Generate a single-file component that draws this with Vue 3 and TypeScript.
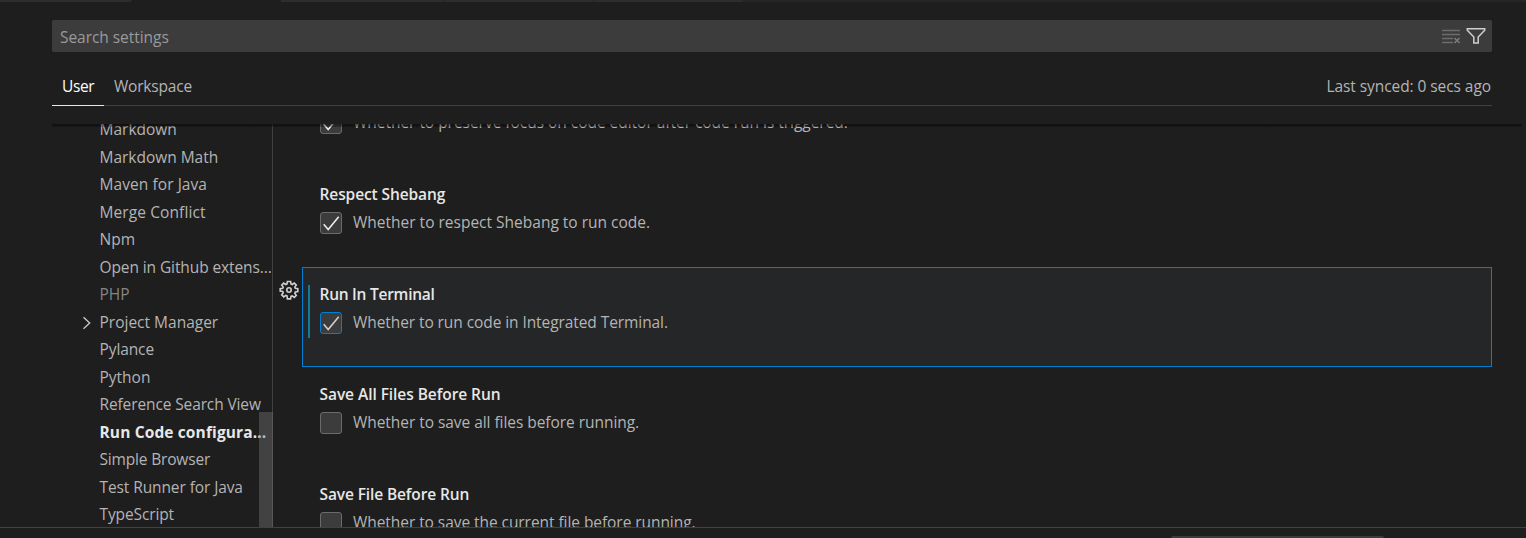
<script setup lang="ts">
interface TreeEntry {
  label: string
  muted?: boolean
  active?: boolean
  expandable?: boolean
  track?: number
}

interface Setting {
  title: string
  description: string
  checked: boolean
  selected?: boolean
  titleTrack?: number
  track?: number
}

const tree: TreeEntry[] = [
  { label: 'Markdown' },
  { label: 'Markdown Math', track: -0.02 },
  { label: 'Maven for Java', track: 0.07 },
  { label: 'Merge Conflict', track: 0.1 },
  { label: 'Npm' },
  { label: 'Open in Github extens...', track: -0.1 },
  { label: 'PHP', muted: true },
  { label: 'Project Manager', expandable: true },
  { label: 'Pylance', track: -0.1 },
  { label: 'Python' },
  { label: 'Reference Search View', track: -0.12 },
  { label: 'Run Code configura...', active: true, track: 0.13 },
  { label: 'Simple Browser', track: -0.17 },
  { label: 'Test Runner for Java', track: -0.1 },
  { label: 'TypeScript', track: -0.12 },
]

const settings: Setting[] = [
  { title: 'Preserve Focus', description: 'Whether to preserve focus on code editor after code run is triggered.', checked: true, track: -0.03 },
  { title: 'Respect Shebang', description: 'Whether to respect Shebang to run code.', checked: true, titleTrack: -0.1 },
  { title: 'Run In Terminal', description: 'Whether to run code in Integrated Terminal.', checked: true, selected: true, titleTrack: -0.25, track: -0.08 },
  { title: 'Save All Files Before Run', description: 'Whether to save all files before running.', checked: false, titleTrack: -0.06, track: -0.05 },
  { title: 'Save File Before Run', description: 'Whether to save the current file before running.', checked: false, titleTrack: -0.12, track: -0.06 },
]

const spacing = (px?: number) => ({ letterSpacing: `${px ?? 0}px` })
</script>

<template>
  <div class="window">
    <div class="tabstrip">
      <span class="tab first"></span>
      <span class="tab current"></span>
      <span class="tab wide"></span>
      <span class="tab"></span>
      <span class="tab last"></span>
    </div>

    <div class="search">
      <span class="placeholder">Search settings</span>
      <svg class="clear" width="20" height="20" viewBox="0 0 20 20">
        <path d="M1 4.500h18M1 8.500h18M1 12.500h11M1 16.500h11" />
        <path class="cross" d="M13.500 12l5 5M18.500 12l-5 5" />
      </svg>
      <svg class="filter" width="20" height="20" viewBox="0 0 20 20">
        <path d="M1.300 2.700h17.400v1.600L12.200 11.100v6H7.800v-6L1.300 4.300z" />
      </svg>
    </div>

    <div class="scopes">
      <span class="scope on">User</span>
      <span class="scope workspace">Workspace</span>
      <span class="sync">Last synced: 0 secs ago</span>
    </div>

    <div class="body">
      <nav class="toc">
        <div class="rows">
          <div v-for="row in tree" :key="row.label" class="row" :class="{ muted: row.muted, active: row.active }">
            <span class="twistie">
              <svg v-if="row.expandable" width="10" height="14" viewBox="0 0 10 14"><path d="M1.500 1.200L7.700 7L1.500 12.800" /></svg>
            </span>
            <span class="label" :style="spacing(row.track)">{{ row.label }}</span>
          </div>
        </div>
        <div class="thumb"></div>
      </nav>

      <main class="list">
        <section v-for="item in settings" :key="item.title" class="item">
          <span class="gutter">
            <svg v-if="item.selected" class="gear" width="20" height="20" viewBox="0 0 20 20">
              <path d="M8.400 1.500h3.200l.4 2.500 1.200.5 2.100-1.500 2 2-1.500 2.100.5 1.300 2.500.4v2.800l-2.500.4-.5 1.300 1.500 2.100-2 2-2.100-1.500-1.200.5-.4 2.500H8.400L8 15.900l-1.200-.5-2.100 1.500-2-2 1.500-2.100-.5-1.300-2.500-.4V8.800l2.500-.4.5-1.300-1.500-2.100 2-2 2.100 1.500L8 4z" />
              <circle cx="10" cy="10" r="2.2" />
            </svg>
          </span>
          <div class="card" :class="{ selected: item.selected }">
            <span v-if="item.selected" class="modified"></span>
            <div class="title" :style="spacing(item.titleTrack)">{{ item.title }}</div>
            <div class="value">
              <span class="check">
                <svg v-if="item.checked" width="20" height="20" viewBox="0 0 20 20"><path d="M2.700 11.200L7.200 16.500L17.700 3.700" /></svg>
              </span>
              <span class="desc" :style="spacing(item.track)">{{ item.description }}</span>
            </div>
          </div>
        </section>
      </main>
      <div class="shadow"></div>
    </div>

    <div class="panel"><div class="panel-input"></div></div>
  </div>
</template>

<style>
html,
body {
  background: #1e1e1e;
  overflow: hidden;
}
</style>

<style scoped>
.window {
  width: 1526px;
  height: 538px;
  display: flex;
  flex-direction: column;
  overflow: hidden;
  background: #1e1e1e;
  color: #b4b4b4;
  font: 15.5px/22px "Open Sans", "Noto Sans", sans-serif;
  white-space: nowrap;
}
.window * { box-sizing: border-box; }
svg { display: block; fill: none; }
.tabstrip { display: flex; flex: none; height: 2px; background: #252526; }
.tab { width: 150px; background: #2d2d2d; border-right: 1px solid #252526; }
.tab.first { width: 132px; }
.tab.current { background: #1e1e1e; border: 0; width: 149px; }
.tab.wide { width: 163px; }
.tab.last { border: 0; width: 149px; }

.search {
  flex: none;
  display: flex;
  align-items: center;
  height: 32px;
  margin: 18px 34px 0 52px;
  padding: 0 6.5px 0 8px;
  border-radius: 2px;
  background: #3c3c3c;
  color: #9a9a9a;
}
.placeholder { flex: 1; padding-top: 2px; letter-spacing: -0.05px; }
.clear { margin-right: 5px; stroke: #6c6c6c; stroke-width: 1.3; }
.clear .cross { stroke: #7c7c7c; stroke-width: 1.5; }
.filter { stroke: #d0d0d0; stroke-width: 1.5; }

.scopes {
  flex: none;
  display: flex;
  height: 38px;
  margin: 16px 34px 0 52px;
  border-bottom: 1px solid #414141;
  line-height: 36px;
}
.scope { height: 38px; padding: 0 10px; }
.scope.on { width: 52px; color: #fff; border-bottom: 1px solid #e7e7e7; letter-spacing: -0.4px; }
.scope.workspace { letter-spacing: -0.2px; }
.sync { margin-left: auto; padding-right: 1px; letter-spacing: -0.07px; }

.body {
  flex: none;
  position: relative;
  display: flex;
  height: 403px;
  margin: 18px 4px 0 52px;
  overflow: hidden;
}
.toc { position: relative; flex: none; width: 221px; height: 403px; border-right: 1px solid #414141; }
.rows { margin-top: -7.75px; }
.row { display: flex; height: 27.5px; line-height: 27.5px; }
.row.muted { color: #858585; }
.row.active { color: #e7e7e7; font-weight: 700; }
.twistie { flex: none; display: flex; align-items: center; width: 47.5px; padding-left: 30px; }
.twistie svg { stroke: #c5c5c5; stroke-width: 1.4; }
.thumb { position: absolute; right: -1px; bottom: 0; width: 14px; height: 115px; background: rgba(121, 121, 121, 0.4); }

.list { flex: 1; margin-top: -57px; padding-right: 30px; }
.item { display: flex; height: 100px; }
.gutter { width: 29px; flex: none; padding: 13px 0 0 5.5px; }
.gear { stroke: #d0d0d0; stroke-width: 1.6; }
.card { position: relative; flex: 1; height: 100px; padding: 15px 0 0 16.5px; border: 1px solid transparent; }
.card.selected { border-color: #007fd4; background: #252627; }
.modified { position: absolute; left: 5px; top: 17px; width: 2px; height: 53px; background: #0c7d9d; }
.title { height: 22px; color: #e7e7e7; font-weight: 600; }
.value { display: flex; height: 22px; margin-top: 7px; line-height: 20px; }
.check { width: 22px; height: 22px; flex: none; border: 1px solid #6b6b6b; border-radius: 3px; background: #3c3c3c; }
.selected .check { border-color: #007fd4; }
.check svg { stroke: #f0f0f0; stroke-width: 1.5; }
.selected .check svg { stroke: #d4d4d4; }
.desc { margin-left: 11.5px; }
.shadow { position: absolute; inset: 0 0 auto 0; height: 3px; background: linear-gradient(rgba(0, 0, 0, 0.5), rgba(0, 0, 0, 0.25)); }

.panel { flex: none; height: 11px; border-top: 1px solid #414141; padding: 8px 142px 0 0; }
.panel-input { width: 213px; height: 2px; margin-left: auto; background: #3c3c3c; border-radius: 2px 2px 0 0; }
</style>
